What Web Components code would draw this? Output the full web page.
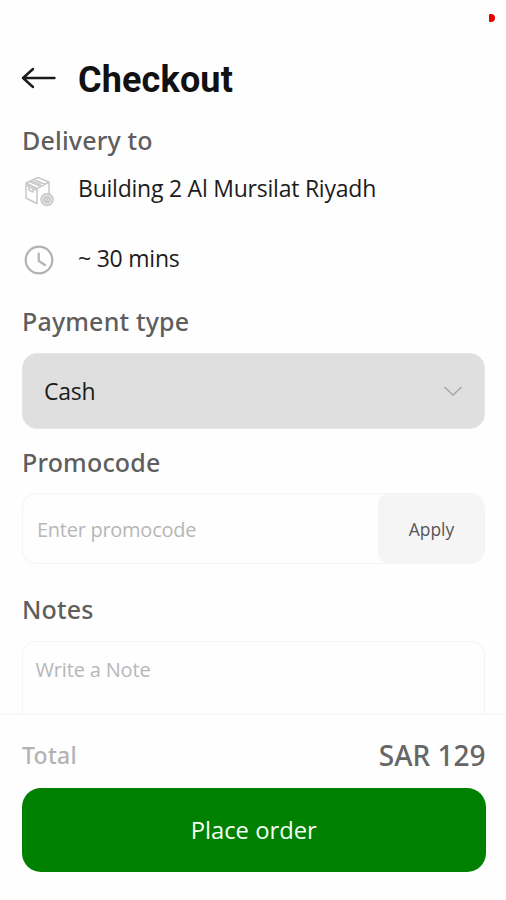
<!DOCTYPE html>
<html lang="en">
<head>
<meta charset="utf-8">
<title>Checkout</title>
<style>
body{margin:0;background:#fefefe;font-family:"Open Sans","Noto Sans",sans-serif;color:#1c1c1c}
</style>
</head>
<body>
<checkout-page></checkout-page>
<script>
const define=(name,html)=>customElements.define(name,class extends HTMLElement{
  constructor(){super();const t=document.createElement('template');t.innerHTML=html;
    this.attachShadow({mode:'open'}).append(t.content.cloneNode(true));}
});

define('page-header',`<style>
:host{display:flex;align-items:center;height:42px;padding:59px 0 0 21px;position:relative}
svg{display:block;width:36px;height:24px;margin-top:-4px}
h1{margin:0 0 0 21px;font:700 36px/42px Roboto,sans-serif;letter-spacing:.15px;color:#111}
i{position:absolute;left:489px;top:14px;width:6px;height:8px;background:#e80000;border-radius:1px 4px 4px 1px}
</style><i></i>
<svg viewBox="0 0 36 24" fill="none" stroke="#1a1a1a" stroke-width="2.4" stroke-linecap="round" stroke-linejoin="round"><path d="M33.5 12H2M12 3L2 12l10 9"/></svg>
<h1><slot></slot></h1>`);

define('section-title',`<style>
:host{display:block;font-family:"Noto Sans",sans-serif;font-size:25px;line-height:34px;font-weight:500;color:#5e5e5e;white-space:nowrap;letter-spacing:.17px}
</style><slot></slot>`);

define('info-row',`<style>
:host{display:flex;height:34px;align-items:center;font-size:23px;line-height:34px;white-space:nowrap;letter-spacing:-.23px}
span{width:56px;flex:none;display:block}
</style><span><slot name="icon"></slot></span><slot></slot>`);

define('box-icon',`<style>:host{display:block;padding-top:7px}svg{display:block}</style>
<svg width="34" height="32" viewBox="0 0 34 32" fill="none" stroke="#c8c8c8" stroke-width="1.5" stroke-linejoin="round">
<path d="M4 7L16 1.500l11 4.500-12 6.500zM4 7V22l11.500 6M15 12.500V27M27 6V18M7.500 5.500l11.500 5M12 3.500L23 8.500M7 9v5l4 2v-5"/>
<path d="M8 5.300l11 5v-2.500L9.500 4.300zM4.500 8l10.500 5v2.500L4.500 10.500z" fill="#cfcfcf" stroke="none"/>
<circle cx="25" cy="23.500" r="6" fill="#e0e0e0"/><circle cx="25" cy="23.500" r="2.800"/><path d="M25 21.500v4"/></svg>`);

define('clock-icon',`<style>:host{display:block;padding-top:3px}svg{display:block}</style>
<svg width="34" height="32" viewBox="0 0 34 32" fill="none" stroke="#b2b2b2" stroke-width="2.200" stroke-linecap="round"><circle cx="17" cy="16" r="13.300"/><path d="M16.700 9.500V17l6.300 4"/></svg>`);

define('select-field',`<style>
:host{display:flex;align-items:center;justify-content:space-between;box-sizing:border-box;height:76px;border-radius:15px;background:#dfdfdf;padding:0 21px;font-size:23px;line-height:34px;letter-spacing:-.23px;border:1px solid #e5e5e5}
svg{display:block}
</style><slot></slot><svg width="20" height="12" viewBox="0 0 20 12" fill="none" stroke="#a6a6a6" stroke-width="1.400"><path d="M1.500 2l8.500 8 8.500-8"/></svg>`);

define('promo-field',`<style>
:host{display:flex;box-sizing:border-box;height:71px;border:1.500px solid #f4f4f4;border-radius:14px;overflow:hidden;background:#fefefe;font-size:20px;color:#b7b7b7}
div{flex:1;padding-left:14px;line-height:71px;letter-spacing:-.27px}
button{all:unset;width:107px;margin:-1px;height:71px;border-radius:12px;background:#f5f5f5;text-align:center;font-size:17.400px;line-height:70px;color:#565656}
</style><div><slot></slot></div><button><slot name="action"></slot></button>`);

define('note-field',`<style>
:host{display:block;box-sizing:border-box;height:110px;border:1.500px solid #f4f4f4;border-radius:14px;padding:12px 12.500px;font-size:20px;line-height:31px;color:#b7b7b7;letter-spacing:-.17px}
</style><slot></slot>`);

define('order-footer',`<style>
:host{display:block;box-sizing:border-box;height:187px;border-top:2px solid #f8f8f8;background:#fefefe;padding:21px 20.500px 0 22px}
.row{display:flex;justify-content:space-between;align-items:center;height:38px;margin-bottom:14px;font-weight:500;font-family:"Noto Sans",sans-serif}
.label{font-size:23px;color:#b3b3b3;letter-spacing:.3px}
.sum{font-size:28px;color:#666}
button{all:unset;display:block;width:100%;height:84px;border-radius:19px;background:#008000;color:#f4fff4;text-align:center;font-size:23.800px;line-height:82px}
</style><div class="row"><span class="label"><slot name="label"></slot></span><span class="sum"><slot name="total"></slot></span></div>
<button><slot name="action"></slot></button>`);

define('checkout-page',`<style>
:host{display:flex;flex-direction:column;width:506px;height:900px;overflow:hidden}
main{flex:1;min-height:0;overflow:hidden;padding:0 21px 0 22px}
</style>
<page-header>Checkout</page-header>
<main>
<section-title style="margin-top:22px">Delivery to</section-title>
<info-row style="margin-top:14px"><box-icon slot="icon"></box-icon>Building 2 Al Mursilat Riyadh</info-row>
<info-row style="margin-top:36px"><clock-icon slot="icon"></clock-icon>~ 30 mins</info-row>
<section-title style="margin-top:29px">Payment type</section-title>
<select-field style="margin-top:15px">Cash</select-field>
<section-title style="margin-top:16px">Promocode</section-title>
<promo-field style="margin-top:14px">Enter promocode<span slot="action">Apply</span></promo-field>
<section-title style="margin-top:28px">Notes</section-title>
<note-field style="margin-top:15px">Write a Note</note-field>
</main>
<order-footer><span slot="label">Total</span><span slot="total">SAR 129</span><span slot="action">Place order</span></order-footer>`);
</script>
</body>
</html>
